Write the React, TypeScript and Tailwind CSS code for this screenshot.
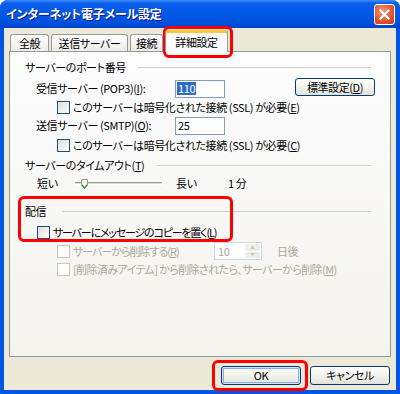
import clsx from "clsx";
import { ReactNode } from "react";

const ui =
  "font-['Noto_Sans_CJK_JP','Noto_Sans_CJK_SC',sans-serif] [font-feature-settings:'palt']";

const Check = ({ disabled }: { disabled?: boolean }) => (
  <span
    className={clsx(
      "inline-block h-[13px] w-[13px] shrink-0 border",
      disabled
        ? "border-[#cac8bb] bg-white"
        : "border-[#1c5180] bg-[linear-gradient(135deg,#dcdcd7,#ffffff)]"
    )}
  />
);

const GroupHeader = ({ label, width }: { label: ReactNode; width: string }) => (
  <div className="flex h-[16px] items-center pl-[15px] pr-[19px]">
    <span className={clsx("shrink-0 whitespace-nowrap", width)}>{label}</span>
    <span className="h-0 flex-1 border-t border-[#d0d0bf]" />
  </div>
);

const XpButton = ({
  children,
  focused,
  className,
}: {
  children: ReactNode;
  focused?: boolean;
  className?: string;
}) => (
  <button
    className={clsx(
      "flex items-center justify-center rounded-[3px] border border-[#003c74] bg-[linear-gradient(#ffffff,#f0f0ea_60%,#e3e2da)] text-[11px] text-black",
      focused && "shadow-[inset_0_0_0_1px_#cee7ff,inset_0_0_0_2px_#89adf0]",
      className
    )}
  >
    {children}
  </button>
);

export default function App() {
  return (
    <div className={clsx("h-[394px] w-[400px] bg-white text-[11px] tracking-[-0.4px] text-black", ui)}>
      <div className="relative flex h-full w-full flex-col rounded-t-[8px] bg-[#0054e3]">
        {/* Title bar */}
        <div className="flex h-[28px] shrink-0 items-center justify-between rounded-t-[8px] bg-[linear-gradient(#3c8cff,#0a5eea_12%,#0058e6_50%,#0052dd_80%,#0040c8)] pl-[6px] pr-[5px]">
          <span className="text-[12px] font-bold tracking-[-0.2px] text-white [text-shadow:1px_1px_#0a1883]">
            インターネット電子メール設定
          </span>
          <span className="flex h-[21px] w-[21px] items-center justify-center rounded-[3px] border border-white bg-[radial-gradient(circle_at_40%_35%,#f29a7a,#e0532c_60%,#c9381a)]">
            <svg width="11" height="11" viewBox="0 0 11 11">
              <path d="M1.5 1.5 L9.5 9.5 M9.5 1.5 L1.5 9.5" stroke="white" strokeWidth="2.2" strokeLinecap="square" />
            </svg>
          </span>
        </div>

        {/* Body */}
        <div className="mx-[4px] mb-[4px] flex flex-1 flex-col bg-[#ece9d8] px-[5px]">
          {/* Tabs */}
          <div className="flex h-[23px] shrink-0 items-end pl-[1px]">
            <div className="flex h-[17px] w-[39px] items-center justify-center rounded-t-[3px] border border-b-0 border-[#919b9c] bg-[linear-gradient(#ffffff,#ecebe5)]">
              全般
            </div>
            <div className="ml-[2px] flex h-[17px] w-[77px] items-center justify-center rounded-t-[3px] border border-b-0 border-[#919b9c] bg-[linear-gradient(#ffffff,#ecebe5)]">
              送信サーバー
            </div>
            <div className="ml-[2px] flex h-[17px] w-[33px] items-center justify-center rounded-t-[3px] border border-b-0 border-[#919b9c] bg-[linear-gradient(#ffffff,#ecebe5)]">
              接続
            </div>
            <div className="relative z-10 -mb-px ml-[2px] flex h-[22px] w-[63px] items-center justify-center rounded-t-[3px] border border-t-0 border-b-0 border-[#919b9c] bg-[#fcfcfe] shadow-[inset_0_3px_0_#ffc83c] pt-[2px]">
              詳細設定
            </div>
          </div>

          {/* Tab panel */}
          <div className="flex h-[306px] shrink-0 flex-col border border-[#919b9c] bg-[linear-gradient(#fcfcfe,#f4f3ee)]">
            <div className="mt-[7px]">
              <GroupHeader label="サーバーのポート番号" width="w-[113px]" />
            </div>

            <div className="mt-[4px] flex h-[19px] items-center pl-[26px] pr-[15px]">
              <span className="w-[139px] shrink-0 whitespace-nowrap">
                受信サーバー (POP3)(<u>I</u>):
              </span>
              <span className="flex h-[18px] w-[50px] items-center border border-[#7f9db9] bg-white pl-[1px]">
                <span className="bg-[#316ac5] px-[1px] leading-[13px] text-white">110</span>
              </span>
              <XpButton className="-mt-[3px] ml-auto h-[18px] w-[80px]">
                標準設定(<u>D</u>)
              </XpButton>
            </div>

            <div className="mt-[1px] flex h-[16px] items-center pl-[47px]">
              <Check />
              <span className="ml-[3px] whitespace-nowrap">
                このサーバーは暗号化された接続 (SSL) が必要(<u>E</u>)
              </span>
            </div>

            <div className="mt-[1px] flex h-[19px] items-center pl-[26px]">
              <span className="w-[139px] shrink-0 whitespace-nowrap">
                送信サーバー (SMTP)(<u>O</u>):
              </span>
              <span className="flex h-[18px] w-[50px] items-center border border-[#7f9db9] bg-white pl-[2px]">
                25
              </span>
            </div>

            <div className="mt-[2px] flex h-[16px] items-center pl-[47px]">
              <Check />
              <span className="ml-[3px] whitespace-nowrap">
                このサーバーは暗号化された接続 (SSL) が必要(<u>C</u>)
              </span>
            </div>

            <div className="mt-[4px]">
              <GroupHeader
                label={
                  <>
                    サーバーのタイムアウト(<u>T</u>)
                  </>
                }
                width="w-[132px]"
              />
            </div>

            <div className="mt-[2px] flex h-[16px] items-center pl-[27px]">
              <span className="w-[38px] shrink-0">短い</span>
              <span className="relative h-[3px] w-[87px] shrink-0 border-t border-b border-t-[#9d9c99] border-b-white bg-[#dcdad0]">
                <svg className="absolute -top-[4px] left-[6px]" width="7" height="10" viewBox="0 0 7 10">
                  <path d="M0.5 0.5 H6.5 V6 L3.5 9.5 L0.5 6 Z" fill="#f7f7f4" stroke="#8e9c8a" />
                  <path d="M1 6 L3.5 9 L6 6" fill="none" stroke="#21a121" strokeWidth="1.2" />
                </svg>
              </span>
              <span className="ml-[14px] w-[52px] shrink-0">長い</span>
              <span>1 分</span>
            </div>

            <div className="mt-[12px]">
              <GroupHeader label="配信" width="w-[37px]" />
            </div>

            <div className="mt-[5px] flex h-[16px] items-center pl-[27px]">
              <Check />
              <span className="ml-[3px] whitespace-nowrap tracking-[-1.2px]">
                サーバーにメッセージのコピーを置く(<u>L</u>)
              </span>
            </div>

            <div className="mt-[2px] flex h-[18px] items-center pl-[47px] text-[#aca899]">
              <Check disabled />
              <span className="ml-[3px] w-[141px] shrink-0 whitespace-nowrap tracking-[-1px]">
                サーバーから削除する(<u>R</u>)
              </span>
              <span className="flex h-[18px] w-[48px] shrink-0 items-center border border-[#c9d7e6] bg-white">
                <span className="flex-1 pl-[3px]">10</span>
                <span className="mr-[1px] flex h-[14px] w-[15px] flex-col gap-px">
                  <span className="flex flex-1 items-center justify-center rounded-[2px] bg-[#eeeee8]">
                    <svg width="5" height="3" viewBox="0 0 5 3">
                      <path d="M0 3 L2.5 0 L5 3 Z" fill="#c6c6bb" />
                    </svg>
                  </span>
                  <span className="flex flex-1 items-center justify-center rounded-[2px] bg-[#eeeee8]">
                    <svg width="5" height="3" viewBox="0 0 5 3">
                      <path d="M0 0 L2.5 3 L5 0 Z" fill="#c6c6bb" />
                    </svg>
                  </span>
                </span>
              </span>
              <span className="ml-[15px]">日後</span>
            </div>

            <div className="mt-[1px] flex h-[16px] items-center pl-[47px] text-[#aca899]">
              <Check disabled />
              <span className="ml-[3px] whitespace-nowrap tracking-[-0.6px]">
                [削除済みアイテム] から削除されたら、サーバーから削除(<u>M</u>)
              </span>
            </div>
          </div>

          {/* Buttons */}
          <div className="mt-[9px] flex justify-end gap-[9px] pr-[1px]">
            <XpButton focused className="h-[19px] w-[80px]">
              OK
            </XpButton>
            <XpButton className="h-[19px] w-[80px]">キャンセル</XpButton>
          </div>
        </div>

        {/* Annotation highlights */}
        <div className="pointer-events-none absolute left-[163px] top-[26px] h-[32px] w-[70px] rounded-[6px] border-[3px] border-[#ff0000]" />
        <div className="pointer-events-none absolute left-[18px] top-[196px] h-[46px] w-[215px] rounded-[6px] border-[3px] border-[#ff0000]" />
        <div className="pointer-events-none absolute left-[212px] top-[360px] h-[31px] w-[96px] rounded-[6px] border-[3px] border-[#ff0000]" />
      </div>
    </div>
  );
}
